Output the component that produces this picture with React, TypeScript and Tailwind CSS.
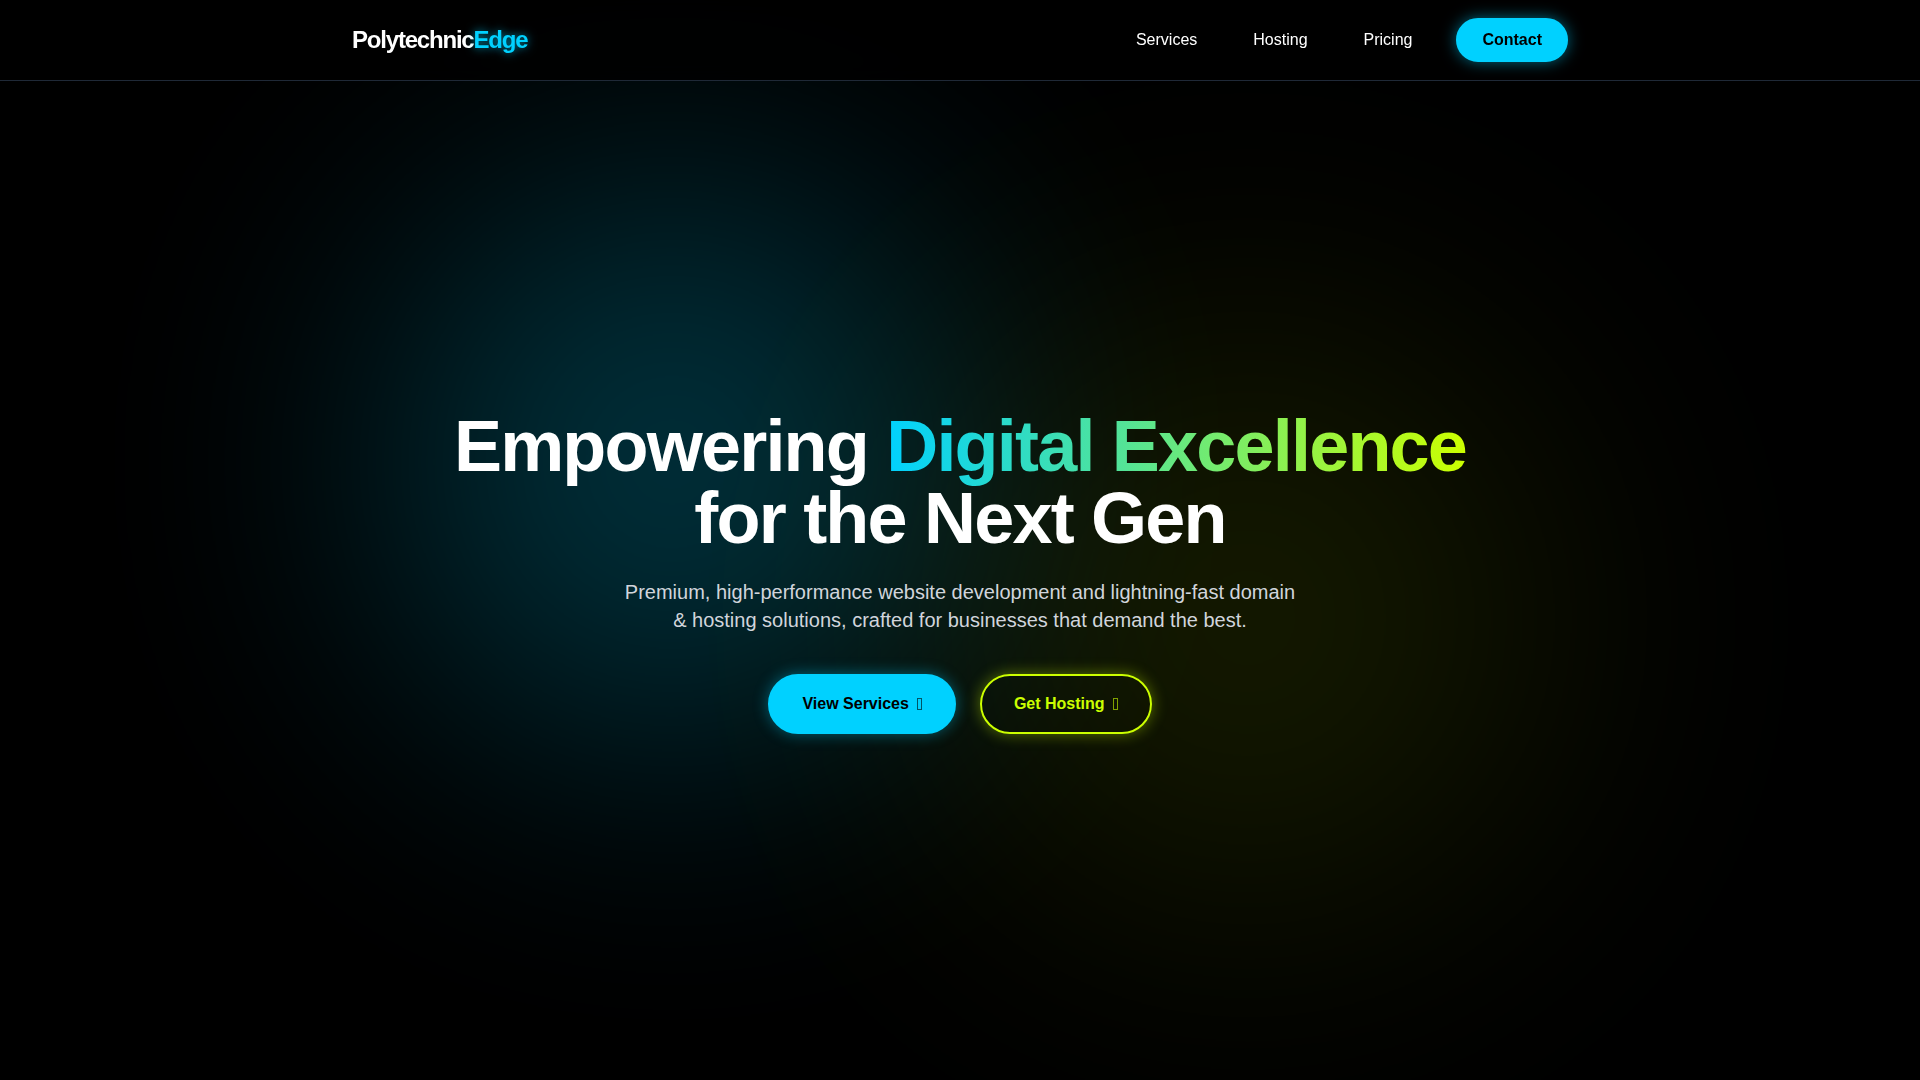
const navLinks = ["Services", "Hosting", "Pricing"]

function Header() {
  return (
    <header className="fixed inset-x-0 top-0 z-50 border-b border-[#1f2937] bg-black/80 backdrop-blur-md">
      <div className="mx-auto flex h-20 max-w-7xl items-center justify-between px-8">
        <a href="#home" className="text-2xl font-bold tracking-tighter text-white">
          Polytechnic
          <span className="text-[#00d1ff] [text-shadow:0_0_10px_rgba(0,209,255,0.7)]">Edge</span>
        </a>
        <nav className="flex items-center gap-8">
          {navLinks.map((link) => (
            <a key={link} href={`#${link.toLowerCase()}`} className="px-3 py-2 text-base text-white">
              {link}
            </a>
          ))}
          <a
            href="#contact"
            className="rounded-full border-2 border-[#00d1ff] bg-[#00d1ff] px-6 py-2 text-base font-bold text-black shadow-[0_0_15px_rgba(0,209,255,0.5)]"
          >
            Contact
          </a>
        </nav>
      </div>
    </header>
  )
}

function GlyphBox() {
  return <span aria-hidden="true" className="h-3 w-[5px] border border-current opacity-60" />
}

function Hero() {
  return (
    <section className="relative flex min-h-screen items-center justify-center overflow-hidden pt-16">
      <div className="absolute top-1/4 left-1/4 size-96 scale-150 rounded-full bg-[#00d1ff] opacity-24 blur-[102px]" />
      <div className="absolute right-1/4 bottom-1/4 size-96 scale-150 rounded-full bg-[#ccff00] opacity-11 blur-[110px]" />
      <div className="relative z-10 mx-auto max-w-7xl px-8 text-center">
        <h1 className="text-7xl leading-none font-bold tracking-tight text-white">
          Empowering{" "}
          <span className="bg-linear-to-r/srgb from-[#00d1ff] to-[#ccff00] bg-clip-text text-transparent">
            Digital Excellence
          </span>
          <br />
          for the Next Gen
        </h1>
        <p className="mx-auto mt-6 max-w-2xl text-xl leading-7 text-gray-300">
          Premium, high-performance website development and lightning-fast domain &amp; hosting solutions, crafted for
          businesses that demand the best.
        </p>
        <div className="mt-10 flex justify-center gap-6">
          <a
            href="#services"
            className="flex items-center gap-2 rounded-full border-2 border-[#00d1ff] bg-[#00d1ff] px-8 py-4 text-base font-bold text-black shadow-[0_0_15px_rgba(0,209,255,0.4)]"
          >
            View Services
            <GlyphBox />
          </a>
          <a
            href="#hosting"
            className="flex items-center gap-2 rounded-full border-2 border-[#ccff00] px-8 py-4 text-base font-bold text-[#ccff00] shadow-[0_0_15px_rgba(204,255,0,0.4)]"
          >
            Get Hosting
            <GlyphBox />
          </a>
        </div>
      </div>
    </section>
  )
}

export default function App() {
  return (
    <div className="min-h-screen bg-black font-['Liberation_Sans',Arial,sans-serif] text-white">
      <Header />
      <main>
        <Hero />
      </main>
    </div>
  )
}
